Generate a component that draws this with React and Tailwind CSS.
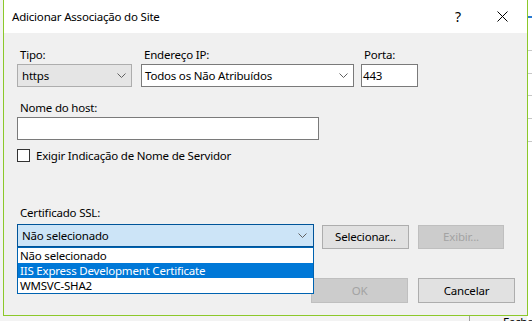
import React from 'react'

const font = { fontFamily: '"Noto Sans", "Open Sans", sans-serif' }

function Chevron({ className = '' }) {
  return (
    <svg width="9" height="5" viewBox="0 0 9 5" className={className}>
      <path d="M0.5 0.5 L4.5 4.5 L8.5 0.5" fill="none" stroke="#606060" strokeWidth="1" />
    </svg>
  )
}

function Label({ children, className = '' }) {
  return <div className={`h-[16px] leading-[16px] pl-[3px] ${className}`}>{children}</div>
}

function Button({ children, disabled, className = '' }) {
  return (
    <div
      className={`h-[24px] flex items-center justify-center border ${
        disabled ? 'bg-[#cccccc] border-[#bfbfbf] text-[#a3a3a3]' : 'bg-[#e1e1e1] border-[#adadad] text-black'
      } ${className}`}
    >
      {children}
    </div>
  )
}

export default function App() {
  const certs = ['Não selecionado', 'IIS Express Development Certificate', 'WMSVC-SHA2']
  const highlighted = 1

  return (
    <div className="w-[532px] h-[321px] overflow-hidden bg-[#f3f3f3] relative text-[11.5px] tracking-[-0.2px] text-black" style={font}>
      {/* background window bits behind the dialog */}
      <div className="absolute right-0 top-0 w-[5px] h-full bg-white">
        <div className="absolute left-0 top-[16px] w-full h-[2px] bg-[#2a7ad1]" />
        <div className="absolute left-0 top-[50px] w-full h-px bg-[#c8c8c8]" />
        <div className="absolute left-0 top-[73px] w-full h-px bg-[#c8c8c8]" />
        <div className="absolute left-0 top-[95px] w-full h-px bg-[#c8c8c8]" />
        <div className="absolute left-0 top-[118px] w-full h-px bg-[#c8c8c8]" />
        <div className="absolute left-0 top-[141px] w-full h-px bg-[#c8c8c8]" />
      </div>
      <div className="absolute left-[469px] top-[315px] w-px h-[6px] bg-[#a0a0a0]" />
      <div className="absolute left-[503px] top-[316px] h-[5px] overflow-hidden">
        <div className="leading-[12px]">Fecha</div>
      </div>

      {/* dialog */}
      <div className="relative ml-[3px] w-[525px] h-[316px] flex flex-col border-x border-b border-[#8cc82a] bg-[#f0f0f0]">
        <div className="h-[33px] bg-white flex items-center shrink-0">
          <span className="pl-[8px] pt-[1px] flex-1">Adicionar Associação do Site</span>
          <span className="text-[14px] w-[12px] text-center mr-[33px]">?</span>
          <svg width="11" height="11" viewBox="0 0 11 11" className="mr-[19px]">
            <path d="M0.5 0.5 L10.5 10.5 M10.5 0.5 L0.5 10.5" stroke="#000" strokeWidth="1" />
          </svg>
        </div>

        <div className="flex flex-col pl-[13px] pr-[12px] pt-[14px] flex-1">
          {/* tipo / ip / porta */}
          <div className="flex gap-[9px]">
            <div className="w-[115px]">
              <Label>Tipo:</Label>
              <div className="mt-px h-[23px] bg-[#e5e5e5] border border-[#adadad] flex items-center pl-[4px] pr-[5px]">
                <span className="flex-1">https</span>
                <Chevron />
              </div>
            </div>
            <div className="w-[213px]">
              <Label>Endereço IP:</Label>
              <div className="mt-px h-[23px] bg-white border border-[#7a7a7a] flex items-center pl-[3px] pr-[5px]">
                <span className="flex-1">Todos os Não Atribuídos</span>
                <Chevron />
              </div>
            </div>
            <div className="w-[57px] ml-[-2px]">
              <Label className="pl-[1px]">Porta:</Label>
              <div className="mt-px h-[23px] bg-white border border-[#7a7a7a] flex items-center pl-[1px]">443</div>
            </div>
          </div>

          {/* host */}
          <Label className="mt-[13px]">Nome do host:</Label>
          <div className="mt-px w-[302px] h-[23px] bg-white border border-[#7a7a7a]" />

          <div className="mt-[9px] flex items-center gap-[6px] h-[13px]">
            <div className="w-[13px] h-[13px] bg-white border border-[#333333]" />
            <span className="leading-[16px]">Exigir Indicação de Nome de Servidor</span>
          </div>

          {/* ssl */}
          <Label className="mt-[43px]">Certificado SSL:</Label>
          <div className="mt-[3px] flex items-start">
            <div className="relative w-[297px] z-10">
              <div className="h-[23px] bg-[#cce4f7] border border-[#005499] flex items-center pl-[4px] pr-[6px]">
                <span className="flex-1">Não selecionado</span>
                <Chevron />
              </div>
              <div className="absolute left-0 top-full w-full bg-white border border-[#0063b1]">
                {certs.map((c, i) => (
                  <div
                    key={c}
                    className={`h-[15px] leading-[15px] pl-[2px] overflow-hidden ${i === highlighted ? 'bg-[#0078d7] text-white' : ''}`}
                  >
                    {c}
                  </div>
                ))}
              </div>
            </div>
            <Button className="ml-[8px] mt-px w-[87px]">Selecionar...</Button>
            <Button disabled className="ml-[9px] mt-px w-[86px]">Exibir...</Button>
          </div>

          {/* ok / cancel */}
          <div className="mt-[29px] flex justify-end gap-[10px]">
            <Button disabled className="w-[97px] h-[25px]">OK</Button>
            <Button className="w-[97px] h-[25px]">Cancelar</Button>
          </div>
        </div>
      </div>
    </div>
  )
}
